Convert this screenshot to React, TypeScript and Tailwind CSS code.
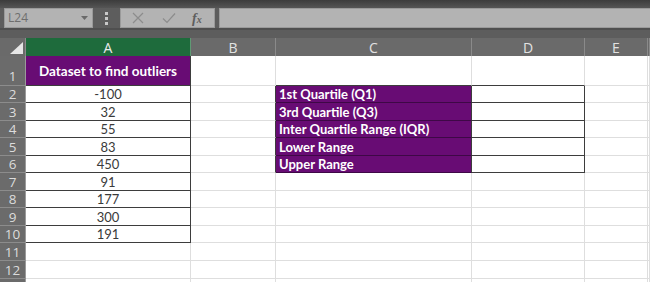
import React from "react";

const colWidths = [165, 85, 196, 113, 63, 2];
const colNames = ["A", "B", "C", "D", "E", ""];
const rowHeights = [30, 17, 18, 17, 18, 17, 18, 17, 18, 17, 18, 18, 10];
const values = ["-100", "32", "55", "83", "450", "91", "177", "300", "191"];
const labels = ["1st Quartile (Q1)", "3rd Quartile (Q3)", "Inter Quartile Range (IQR)", "Lower Range", "Upper Range"];

const PURPLE = "bg-[#680c74]";

function Cell({ r, c }: { r: number; c: number }) {
  const w = colWidths[c];
  const h = rowHeights[r];
  let cls = "box-border border-r border-b border-[#dedede] bg-white";
  let content: React.ReactNode = null;

  if (c === 0) {
    if (r === 0) {
      cls = `box-border border-r border-b border-[#3d3d3d] ${PURPLE} flex items-center justify-center`;
      content = (
        <span className="text-white font-bold text-[13.5px] pt-[1px]" style={{ fontFamily: "Lato, 'Open Sans', sans-serif" }}>
          Dataset to find outliers
        </span>
      );
    } else if (r >= 1 && r <= 9) {
      cls = "box-border border-r border-b border-[#3d3d3d] bg-white flex items-end justify-center";
      content = (
        <span className="text-[#3a3a3a] text-[13px] leading-[16px]" style={{ fontFamily: "Lato, 'Open Sans', sans-serif" }}>
          {values[r - 1]}
        </span>
      );
    }
  } else if (c === 1) {
    if (r >= 1 && r <= 5) cls = "box-border border-r border-b border-r-[#3d3d3d] border-b-[#dedede] bg-white";
  } else if (c === 2) {
    if (r === 0) cls = "box-border border-r border-b border-r-[#dedede] border-b-[#3d3d3d] bg-white";
    if (r >= 1 && r <= 5) {
      cls = `box-border border-r border-b border-r-[#3d3d3d] border-b-[#3e0846] ${PURPLE} flex items-end`;
      content = (
        <span className="text-white font-bold text-[13px] leading-[16px] pl-[3px]" style={{ fontFamily: "Lato, 'Open Sans', sans-serif" }}>
          {labels[r - 1]}
        </span>
      );
    }
  } else if (c === 3) {
    if (r === 0) cls = "box-border border-r border-b border-r-[#dedede] border-b-[#3d3d3d] bg-white";
    if (r >= 1 && r <= 5) cls = "box-border border-r border-b border-[#3d3d3d] bg-white";
  }

  return (
    <div className={`${cls} overflow-hidden`} style={{ width: w, height: h }}>
      {content}
    </div>
  );
}

export default function App() {
  return (
    <div className="w-[650px] h-[282px] overflow-hidden bg-white flex flex-col" style={{ fontFamily: "'Open Sans', sans-serif" }}>
      {/* toolbar */}
      <div className="h-[38px] bg-[#5d5d5d] flex flex-col shrink-0">
        <div className="h-[8px] bg-gradient-to-b from-[#3c3c3c] to-[#555555]" />
        <div className="h-[20px] flex items-stretch">
          <div className="ml-[4px] w-[89px] bg-[#b3b3b3] border border-[#9a9a9a] flex items-center justify-between px-[3px]">
            <span className="text-[12px] text-[#6e6e6e]" style={{ fontFamily: "'Open Sans', sans-serif" }}>L24</span>
            <svg width="7" height="4" viewBox="0 0 7 4" className="mr-[1px]"><path d="M0 0 L7 0 L3.5 4 Z" fill="#6a6a6a" /></svg>
          </div>
          <div className="w-[27px] flex flex-col items-center justify-center gap-[2px]">
            <div className="w-[3px] h-[3px] bg-[#c8c8c8]" />
            <div className="w-[3px] h-[3px] bg-[#c8c8c8]" />
            <div className="w-[3px] h-[3px] bg-[#c8c8c8]" />
          </div>
          <div className="w-[95px] bg-[#b3b3b3] border border-[#9a9a9a] flex items-center">
            <svg width="12" height="12" viewBox="0 0 12 12" className="ml-[11px]"><path d="M1 1 L11 11 M11 1 L1 11" stroke="#8c8c8c" strokeWidth="1.2" /></svg>
            <svg width="14" height="12" viewBox="0 0 14 12" className="ml-[18px]"><path d="M1 6.5 L5 10.5 L13 1.5" stroke="#8c8c8c" strokeWidth="1.2" fill="none" /></svg>
            <span className="ml-[16px] text-[14px] italic font-bold text-[#5e5e5e]" style={{ fontFamily: "'Liberation Serif', serif" }}>
              f<span className="text-[10px]">x</span>
            </span>
          </div>
          <div className="ml-[4px] flex-1 bg-[#b3b3b3] border-y border-l border-[#9a9a9a]" />
        </div>
        <div className="h-[2px] bg-[#4f4f4f]" />
      </div>

      {/* column header */}
      <div className="h-[18px] flex shrink-0 bg-[#6a6a6a]">
        <div className="w-[26px] h-full border-r border-[#8a8a8a] box-border flex items-end justify-end pr-[2px] pb-[2px]">
          <svg width="13" height="12" viewBox="0 0 13 12"><path d="M13 0 L13 12 L0 12 Z" fill="#e6e6e6" /></svg>
        </div>
        {colNames.map((n, i) => (
          <div
            key={i}
            className={`box-border border-r h-full flex items-center justify-center text-[14px] ${i === 0 ? "bg-[#1e6b3c] border-[#5f9a74] text-[#eaeaea]" : "border-[#8a8a8a] text-[#e2e2e2]"}`}
            style={{ width: colWidths[i] }}
          >
            {n}
          </div>
        ))}
      </div>

      {/* rows */}
      {rowHeights.map((h, r) => (
        <div key={r} className="flex shrink-0" style={{ height: h }}>
          <div
            className={`w-[26px] box-border border-r border-b border-b-[#8c8c8c] border-r-[#9a9a9a] bg-[#6b6b6b] overflow-hidden flex justify-center text-[#dcdcdc] text-[13.5px] ${r === 0 ? "items-end pb-[1px]" : "items-center"}`}
            style={{ fontFamily: "'Open Sans', sans-serif", height: h }}
          >
            {r < 12 && <span className="leading-[16px]">{r + 1}</span>}
          </div>
          {colWidths.map((_, c) => (
            <Cell key={c} r={r} c={c} />
          ))}
        </div>
      ))}
    </div>
  );
}
